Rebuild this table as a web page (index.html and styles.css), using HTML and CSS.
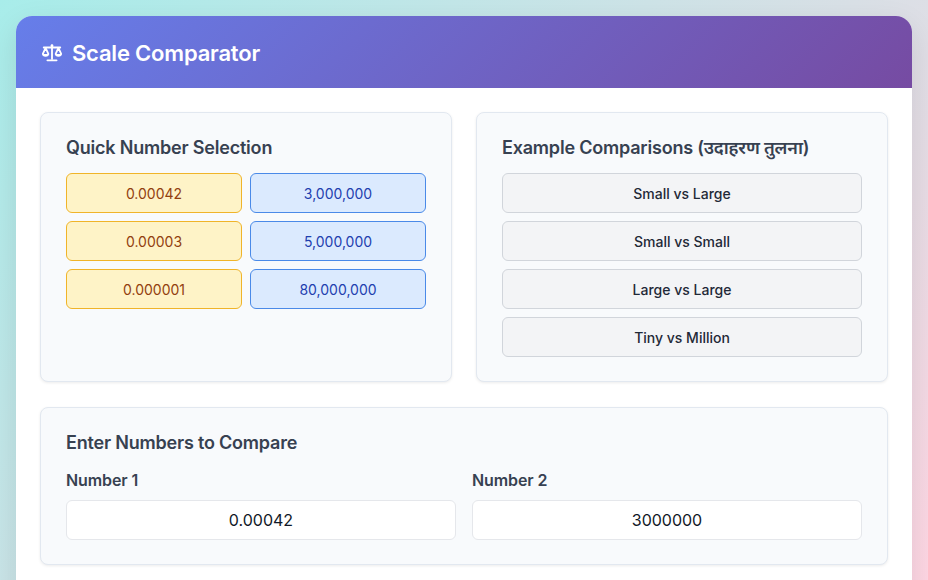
FILE: index.html
```html
<!DOCTYPE html>
<html lang="en">
<head>
<meta charset="utf-8">
<title>Scale Comparator</title>
<link rel="stylesheet" href="styles.css">
</head>
<body>
<div class="app">
  <header class="header">
    <svg class="logo" viewBox="0 0 24 20" width="22" height="19" aria-hidden="true">
      <g fill="none" stroke="#fff" stroke-width="2" stroke-linecap="round" stroke-linejoin="round">
        <path d="M12 2v15"/>
        <path d="M3 4.5h18"/>
        <path d="M7 18.5h10"/>
        <path d="M5 5l-3 6.5M5 5l3 6.5"/>
        <path d="M19 5l-3 6.5M19 5l3 6.5"/>
      </g>
      <path d="M1.3 11.5h7.4a3.7 3 0 0 1-7.4 0z" fill="#fff"/>
      <path d="M15.3 11.5h7.4a3.7 3 0 0 1-7.4 0z" fill="#fff"/>
      <circle cx="12" cy="3" r="1.6" fill="#fff"/>
    </svg>
    <h1 class="title">Scale Comparator</h1>
  </header>
  <main class="content">
    <div class="top-row">
      <section class="card">
        <h2 class="card-title">Quick Number Selection</h2>
        <div class="quick-grid">
          <button class="chip chip-small">0.00042</button>
          <button class="chip chip-large">3,000,000</button>
          <button class="chip chip-small">0.00003</button>
          <button class="chip chip-large">5,000,000</button>
          <button class="chip chip-small">0.000001</button>
          <button class="chip chip-large">80,000,000</button>
        </div>
      </section>
      <section class="card">
        <h2 class="card-title">Example Comparisons (उदाहरण तुलना)</h2>
        <div class="example-list">
          <button class="example">Small vs Large</button>
          <button class="example">Small vs Small</button>
          <button class="example">Large vs Large</button>
          <button class="example">Tiny vs Million</button>
        </div>
      </section>
    </div>
    <section class="card">
      <h2 class="card-title">Enter Numbers to Compare</h2>
      <div class="inputs">
        <label class="field">
          <span class="field-label">Number 1</span>
          <input class="field-input" type="text" value="0.00042">
        </label>
        <label class="field">
          <span class="field-label">Number 2</span>
          <input class="field-input" type="text" value="3000000">
        </label>
      </div>
    </section>
  </main>
</div>
</body>
</html>
```

FILE: styles.css
```css
* { box-sizing: border-box; }
html, body { height: 100%; }
body {
  margin: 0;
  padding: 16px;
  font-family: Inter, "Noto Sans", "Noto Sans Devanagari", sans-serif;
  background: linear-gradient(135deg, #a8edea 0%, #fed6e3 100%);
  overflow: hidden;
}
.app {
  background: #fff;
  border-radius: 16px;
  overflow: hidden;
  box-shadow: 0 10px 30px rgba(0, 0, 0, 0.1);
  min-height: 700px;
}
.header {
  height: 72px;
  display: flex;
  align-items: center;
  gap: 9px;
  padding: 2px 24px 0 25px;
  background: linear-gradient(135deg, #667eea 0%, #764ba2 100%);
}
.logo { display: block; margin-top: -1px; }
.title {
  margin: 0;
  color: #fff;
  font-size: 22px;
  font-weight: 600;
  letter-spacing: -0.2px;
}
.content {
  padding: 24px;
  display: flex;
  flex-direction: column;
  gap: 25px;
}
.top-row {
  display: grid;
  grid-template-columns: 1fr 1fr;
  gap: 24px;
}
.card {
  background: #f8fafc;
  border: 1px solid #e2e8f0;
  border-radius: 8px;
  padding: 24px 25px 24px 25px;
  box-shadow: 0 1px 3px rgba(0, 0, 0, 0.08);
}
.card-title {
  margin: 0 0 14px;
  font-size: 18px;
  line-height: 22px;
  font-weight: 600;
  letter-spacing: -0.2px;
  color: #374151;
}
.quick-grid {
  display: grid;
  grid-template-columns: 1fr 1fr;
  gap: 8px;
}
.chip, .example {
  height: 40px;
  border-radius: 6px;
  font-family: inherit;
  font-size: 14px;
  cursor: pointer;
}
.chip-small {
  background: #fef3c7;
  border: 1px solid #f0b429;
  color: #92400e;
}
.chip-large {
  background: #dbeafe;
  border: 1px solid #4a8ae8;
  color: #1e40af;
}
.example-list {
  display: flex;
  flex-direction: column;
  gap: 8px;
}
.example {
  background: #f3f4f6;
  border: 1px solid #d1d5db;
  color: #1f2937;
  font-weight: 500;
}
.inputs {
  display: grid;
  grid-template-columns: 1fr 1fr;
  gap: 16px;
}
.field { display: flex; flex-direction: column; gap: 8px; }
.field-label {
  font-size: 16px;
  line-height: 24px;
  font-weight: 600;
  letter-spacing: -0.1px;
  color: #374151;
}
.field-input {
  height: 40px;
  border: 1px solid #e5e7eb;
  border-radius: 6px;
  background: #fff;
  text-align: center;
  font-family: inherit;
  font-size: 16px;
  color: #111827;
}
```
